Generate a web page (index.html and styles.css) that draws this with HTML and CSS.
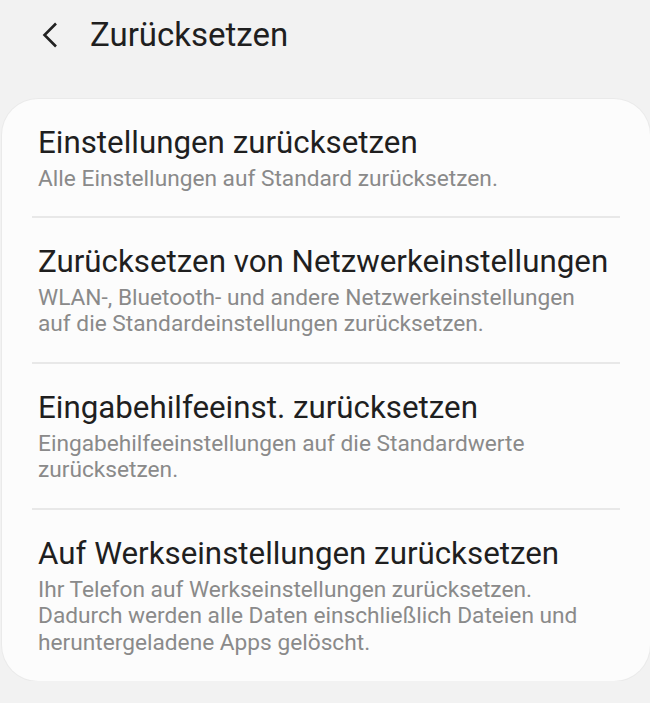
FILE: index.html
```html
<!DOCTYPE html>
<html lang="de">
<head>
    <meta charset="UTF-8">
    <meta name="viewport" content="width=device-width, initial-scale=1.0">
    <title>Zurücksetzen</title>
    <link rel="stylesheet" href="styles.css">
</head>
<body>
    <div class="header">
        <svg class="back" width="16" height="26" viewBox="0 0 16 26">
            <path d="M14 1.5 L2.5 13 L14 24.5" fill="none" stroke="#222" stroke-width="2.6"/>
        </svg>
        <h1 class="header-title">Zurücksetzen</h1>
    </div>

    <div class="card">
        <div class="item">
            <div class="item-title">Einstellungen zurücksetzen</div>
            <div class="item-sub">Alle Einstellungen auf Standard zurücksetzen.</div>
        </div>
        <div class="divider"></div>
        <div class="item">
            <div class="item-title">Zurücksetzen von Netzwerkeinstellungen</div>
            <div class="item-sub">WLAN-, Bluetooth- und andere Netzwerkeinstellungen<br>auf die Standardeinstellungen zurücksetzen.</div>
        </div>
        <div class="divider"></div>
        <div class="item">
            <div class="item-title">Eingabehilfeeinst. zurücksetzen</div>
            <div class="item-sub">Eingabehilfeeinstellungen auf die Standardwerte<br>zurücksetzen.</div>
        </div>
        <div class="divider"></div>
        <div class="item">
            <div class="item-title">Auf Werkseinstellungen zurücksetzen</div>
            <div class="item-sub">Ihr Telefon auf Werkseinstellungen zurücksetzen.<br>Dadurch werden alle Daten einschließlich Dateien und<br>heruntergeladene Apps gelöscht.</div>
        </div>
    </div>
</body>
</html>
```

FILE: styles.css
```css
body {
    margin: 0;
    background-color: #f2f2f2;
    font-family: Roboto, "Noto Sans", sans-serif;
    color: #1f1f1f;
}
.header {
    height: 99px;
    display: flex;
    align-items: flex-start;
}
.back {
    margin-top: 22px;
    margin-left: 42px;
}
.header-title {
    margin: 13px 0 0 32px;
    font-size: 33px;
    font-weight: 400;
    line-height: 44px;
}
.card {
    margin-left: 2px;
    background-color: #fcfcfc;
    border-radius: 36px;
    box-shadow: 0 0 0 1px rgba(0, 0, 0, 0.03);
}
.item {
    padding: 26px 36px 24px 36px;
}
.item-title {
    font-size: 31.3px;
    line-height: 36px;
}
.item-sub {
    margin-top: 4.5px;
    font-size: 22.7px;
    line-height: 26.7px;
    color: #8a8a8a;
}
.divider {
    height: 2px;
    margin: 0 30px 0 30px;
    background-color: #e8e8e8;
}
```
